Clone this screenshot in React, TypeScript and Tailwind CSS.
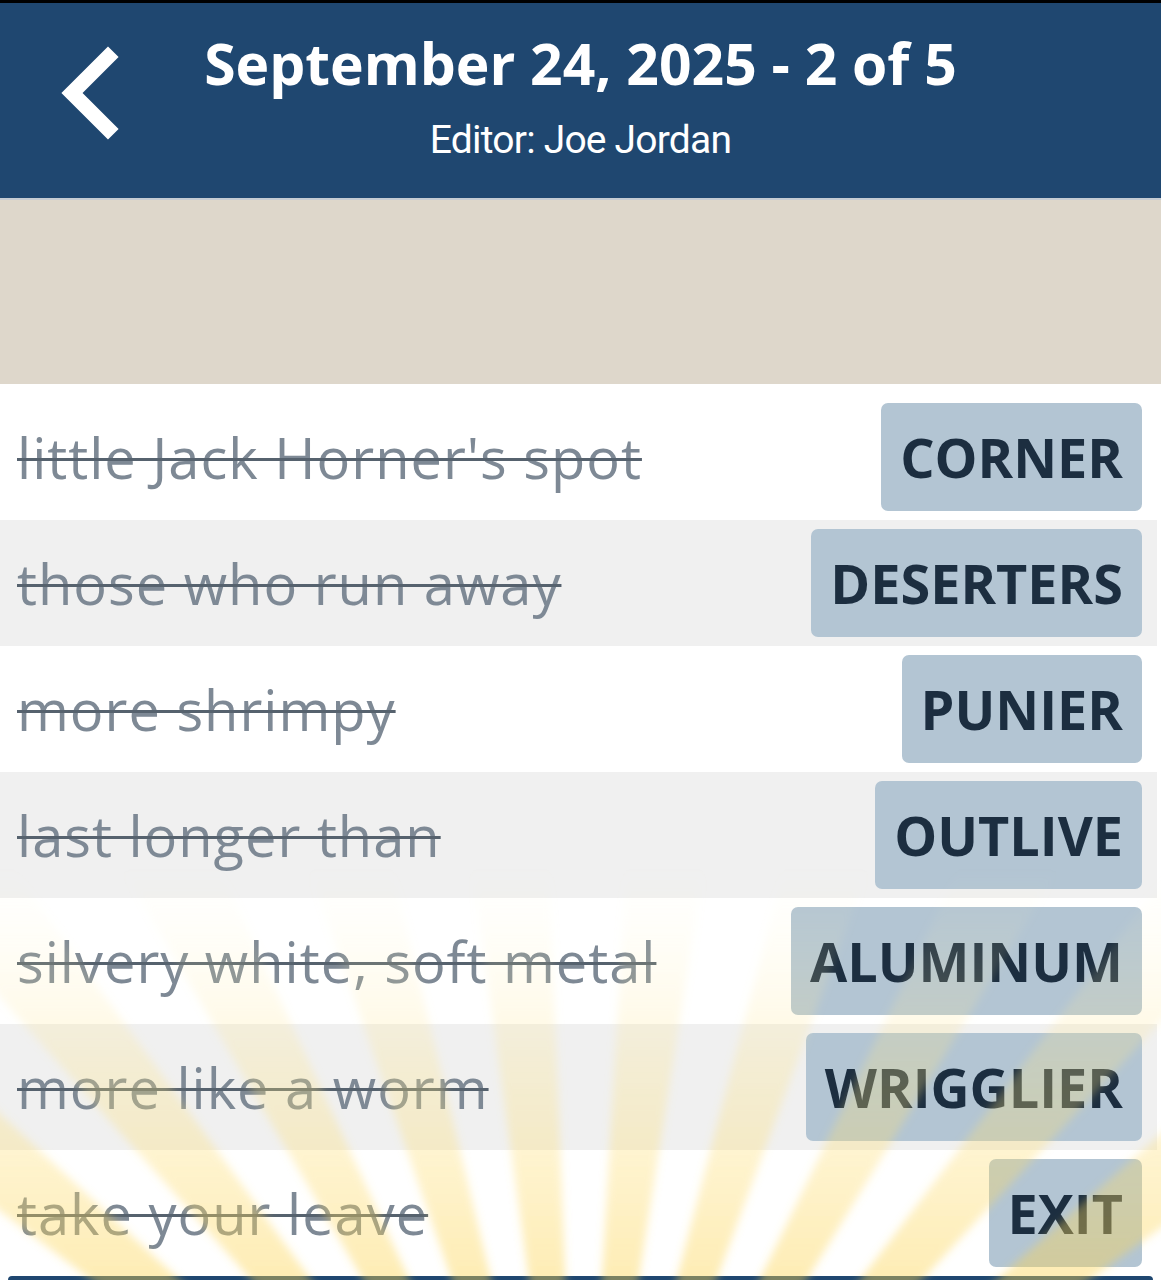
import React from "react";

const clues: { clue: string; answer: string }[] = [
  { clue: "little Jack Horner's spot", answer: "CORNER" },
  { clue: "those who run away", answer: "DESERTERS" },
  { clue: "more shrimpy", answer: "PUNIER" },
  { clue: "last longer than", answer: "OUTLIVE" },
  { clue: "silvery white, soft metal", answer: "ALUMINUM" },
  { clue: "more like a worm", answer: "WRIGGLIER" },
  { clue: "take your leave", answer: "EXIT" },
];

function BackChevron() {
  return (
    <svg width="64" height="96" viewBox="0 0 64 96" className="block">
      <path d="M50 12 L14 48 L50 84" fill="none" stroke="#ffffff" strokeWidth="15" strokeLinecap="square" strokeLinejoin="miter" />
    </svg>
  );
}

// Soft sunburst glow rising from below the list
function Sunburst() {
  const cx = 580;
  const cy = 1650;
  const r = 1100;
  const rays: string[] = [];
  const count = 16;
  for (let i = 0; i < count; i++) {
    const a0 = Math.PI + ((i + 0.3) / count) * Math.PI;
    const a1 = a0 + (Math.PI / count) * 0.5;
    const x0 = cx + r * Math.cos(a0);
    const y0 = cy + r * Math.sin(a0);
    const x1 = cx + r * Math.cos(a1);
    const y1 = cy + r * Math.sin(a1);
    rays.push(`M${cx} ${cy} L${x0.toFixed(1)} ${y0.toFixed(1)} L${x1.toFixed(1)} ${y1.toFixed(1)} Z`);
  }
  return (
    <svg className="pointer-events-none absolute left-0 top-0" width="1161" height="1280" viewBox="0 0 1161 1280">
      <defs>
        <linearGradient id="rayFade" x1="0" y1="1280" x2="0" y2="870" gradientUnits="userSpaceOnUse">
          <stop offset="0" stopColor="#fcd34d" stopOpacity="0.42" />
          <stop offset="0.55" stopColor="#fde68a" stopOpacity="0.26" />
          <stop offset="1" stopColor="#fef3c7" stopOpacity="0" />
        </linearGradient>
        <filter id="raySoft" x="-10%" y="-10%" width="120%" height="120%">
          <feGaussianBlur stdDeviation="4" />
        </filter>
      </defs>
      <g filter="url(#raySoft)">
        {rays.map((d, i) => (
          <path key={i} d={d} fill="url(#rayFade)" />
        ))}
      </g>
    </svg>
  );
}

export default function App() {
  return (
    <div className="relative h-[1280px] w-[1161px] overflow-hidden bg-white" style={{ fontFamily: "'Open Sans', Lato, sans-serif" }}>
      <div className="h-[3px] bg-black" />
      <header className="relative flex h-[195px] flex-col items-center bg-[#1f4770] text-white">
        <div className="absolute left-[58px] top-[42px]">
          <BackChevron />
        </div>
        <h1 className="mt-[26px] text-[57px] font-bold leading-[68px]">September 24, 2025 - 2 of 5</h1>
        <p className="mt-[20px] text-[39px] leading-[46px] tracking-[-0.8px]" style={{ fontFamily: "Roboto, 'Noto Sans', sans-serif" }}>
          Editor: Joe Jordan
        </p>
      </header>
      <div className="h-[2px] bg-[#c5ccd3]" />
      <div className="h-[184px] bg-[#ded7cb]" />
      <div className="pt-[10px] pr-[4px]">
        {clues.map((c, i) => (
          <div key={c.answer} className={`flex h-[126px] items-center justify-between pl-[17px] pr-[15px] ${i % 2 === 1 ? "bg-[#f0f0f0]" : "bg-white"}`}>
            <span className="text-[56px] leading-none tracking-[1px] text-[#7e8995] line-through decoration-[#56626e] decoration-[3px]">{c.clue}</span>
            <span className="flex h-[108px] items-center rounded-[7px] bg-[#b3c5d3] px-[19px] text-[54px] font-bold leading-none text-[#1c2e40]">
              {c.answer}
            </span>
          </div>
        ))}
      </div>
      <div className="mx-[8px] h-[4px] rounded-t-[6px] bg-[#1f4770]" />
      <Sunburst />
    </div>
  );
}
